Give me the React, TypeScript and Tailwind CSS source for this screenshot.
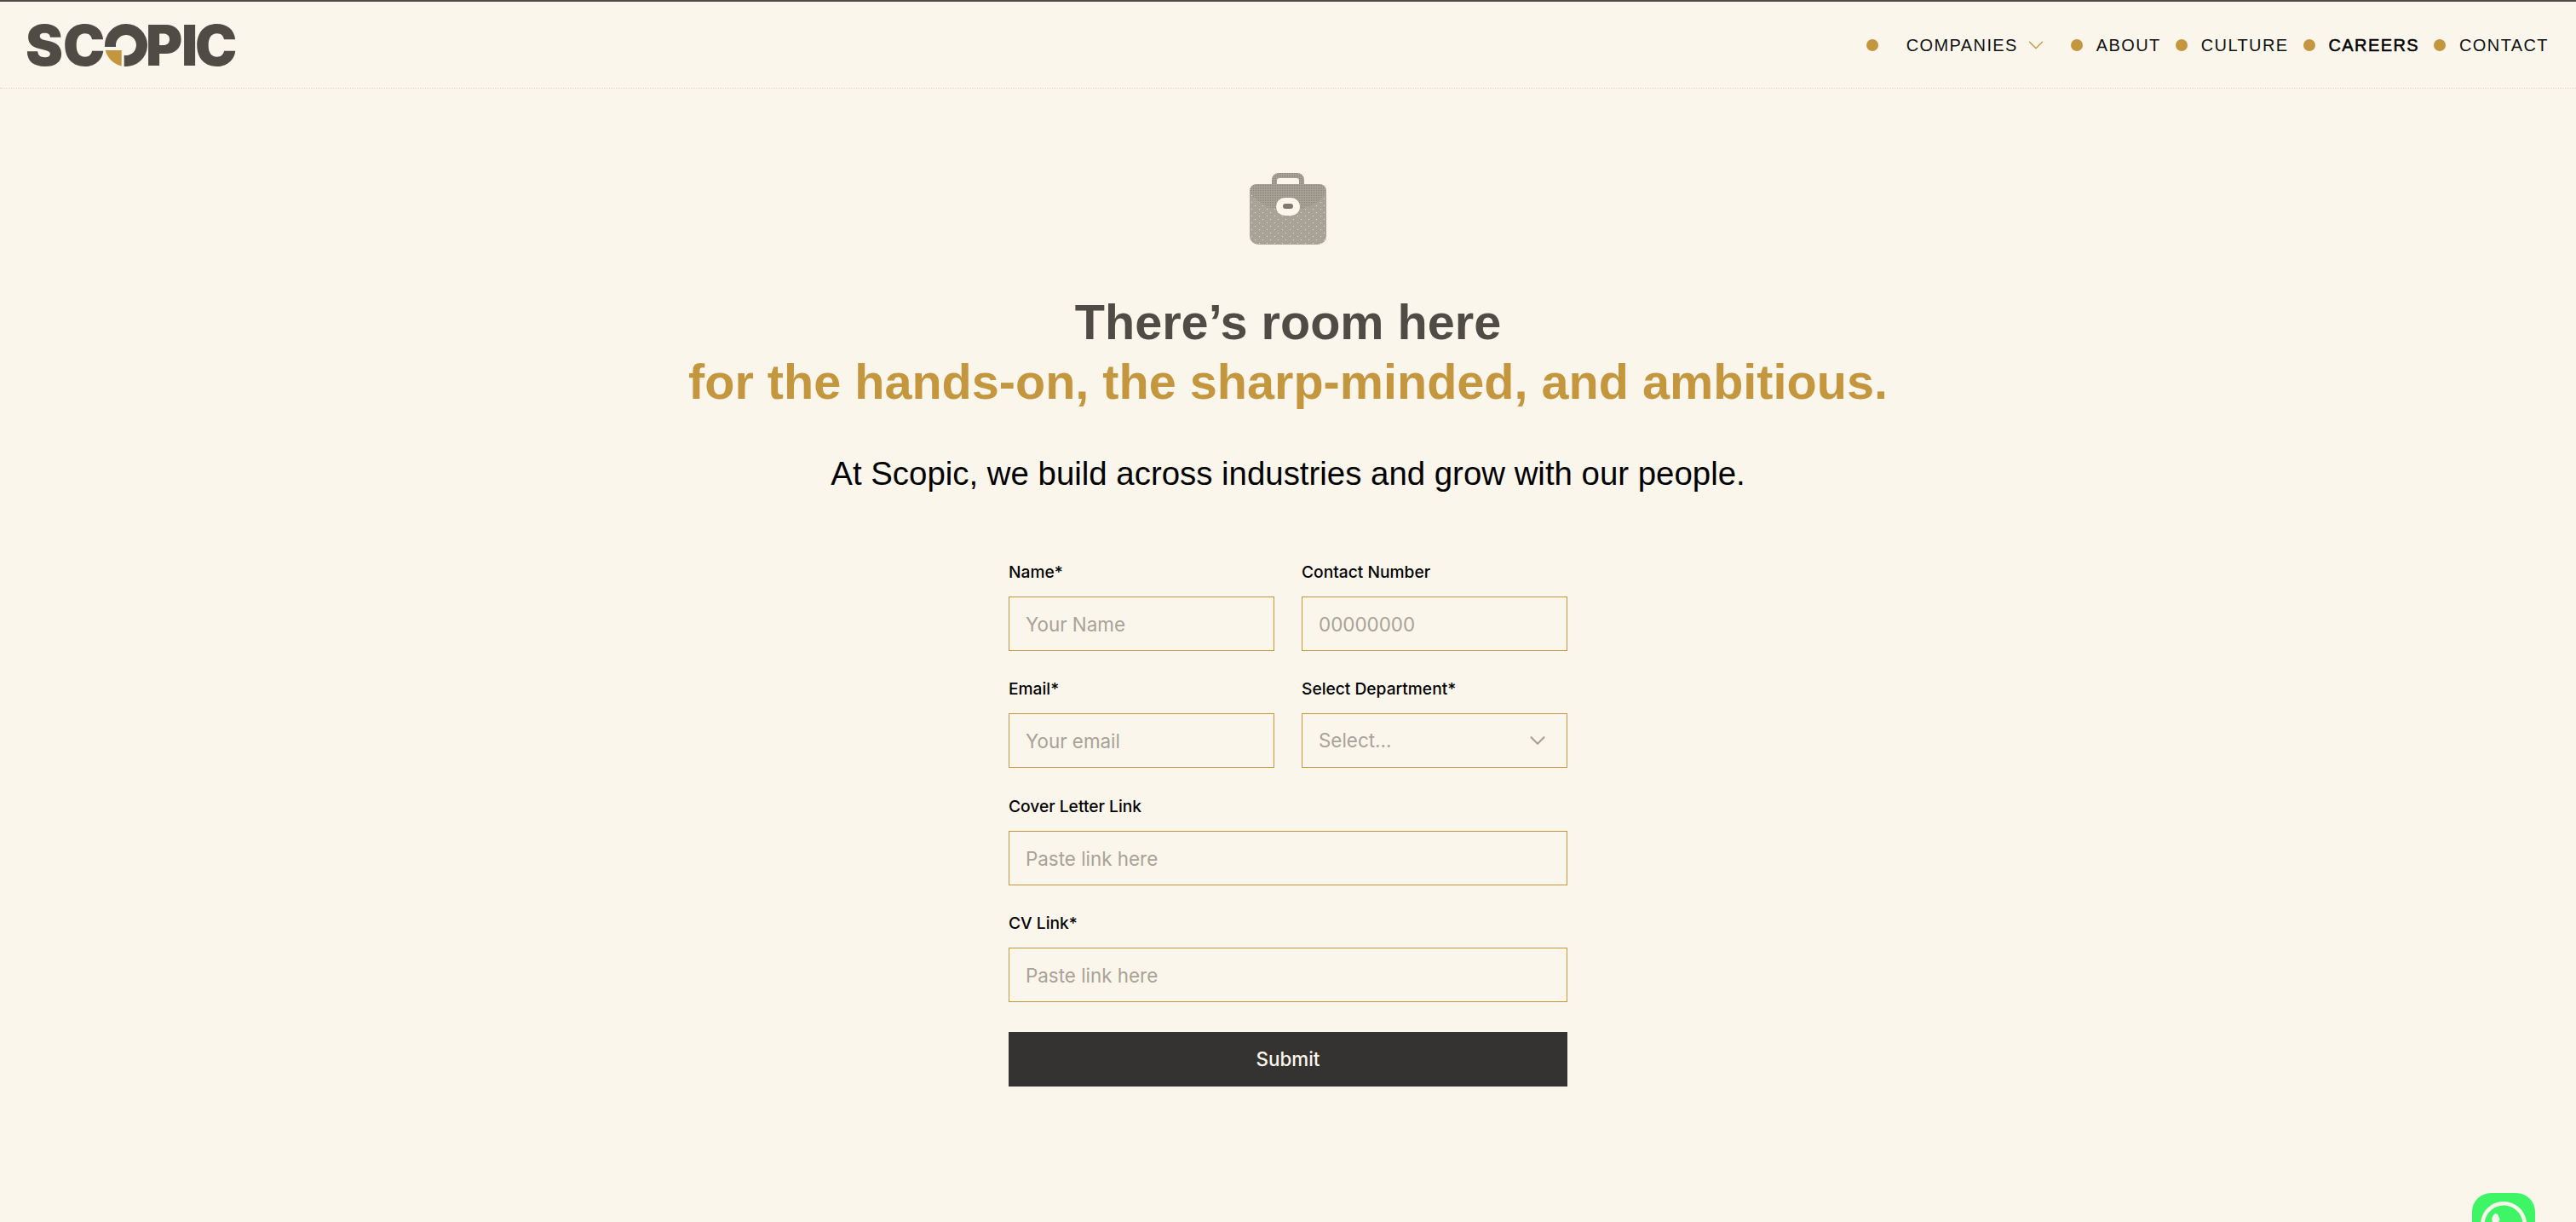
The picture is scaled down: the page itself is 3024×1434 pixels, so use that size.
import { ChevronDown } from 'lucide-react'
import { FaWhatsapp } from 'react-icons/fa'

const NAV = [
  { label: 'ABOUT' },
  { label: 'CULTURE' },
  { label: 'CAREERS', active: true },
  { label: 'CONTACT' },
]

function Dot() {
  return <span className="h-3.5 w-3.5 shrink-0 rounded-full bg-[#c4973f]" />
}

function Logo() {
  return (
    <div className="-ml-0.5 flex h-[50px] items-center font-['Inter',sans-serif] text-[66px] leading-none font-black text-[#504b45]">
      <span className="w-11">S</span>
      <span className="w-[49px]">C</span>
      <svg viewBox="0 0 50 50" className="h-[50px] w-[50px] shrink-0">
        <path
          d="M0.1 27A25 25 0 1 1 22.7 49.9V36.8A12 12 0 1 0 13.1 27Z"
          fill="#504b45"
        />
        <path d="M0.7 31H19.7V49.4A25 25 0 0 1 0.7 31Z" fill="#c4973f" />
      </svg>
      <span className="-ml-0.5 w-[42px]">P</span>
      <span className="w-4">I</span>
      <span>C</span>
    </div>
  )
}

function Briefcase() {
  return (
    <svg viewBox="0 0 90 84" className="h-[84px] w-[90px]">
      <defs>
        <pattern id="dense" width="2" height="2" patternUnits="userSpaceOnUse">
          <rect width="2" height="2" fill="#a8a297" />
          <rect width="1" height="1" fill="#8a857b" />
        </pattern>
        <pattern id="light" width="9" height="8" patternUnits="userSpaceOnUse">
          <rect width="9" height="8" fill="#a8a297" />
          <rect x="2" y="2" width="1" height="1" fill="#e6e1d5" />
          <rect x="6" y="6" width="1" height="1" fill="#e6e1d5" />
        </pattern>
      </defs>
      <path
        d="M26 14V8a8 8 0 0 1 8-8h22a8 8 0 0 1 8 8v6h-6V9a3 3 0 0 0-3-3H35a3 3 0 0 0-3 3v5Z"
        fill="url(#dense)"
      />
      <rect y="13" width="90" height="71" rx="10" fill="url(#light)" />
      <path d="M8 13H82a8 8 0 0 1 8 8c-6 14-22 22-45 22S6 35 0 21a8 8 0 0 1 8-8Z" fill="url(#dense)" />
      <rect x="31" y="29" width="28" height="21" rx="10.5" fill="#fbf6ec" />
      <rect x="39" y="36" width="12" height="6" rx="3" fill="#7f7a70" />
    </svg>
  )
}

function Field({ label, placeholder }: { label: string; placeholder: string }) {
  return (
    <label className="flex flex-col gap-4">
      <span className="text-[19.2px] leading-[25px] font-medium text-black">{label}</span>
      <input
        type="text"
        placeholder={placeholder}
        className="h-16 w-full border border-[#c4973f] bg-transparent px-[19px] text-[22.4px] text-black outline-none placeholder:text-[#a8a297]"
      />
    </label>
  )
}

function SelectField({ label, placeholder }: { label: string; placeholder: string }) {
  return (
    <div className="flex flex-col gap-4">
      <span className="text-[19.2px] leading-[25px] font-medium text-black">{label}</span>
      <div className="flex h-16 items-center justify-between border border-[#c4973f] px-[19px] text-[22.4px] text-[#a8a297]">
        <span>{placeholder}</span>
        <ChevronDown size={30} strokeWidth={1.75} className="text-[#a8a297]" />
      </div>
    </div>
  )
}

export default function App() {
  return (
    <div className="relative h-[1434px] overflow-hidden border-t-2 border-[#504b45] bg-[#fbf6ec] font-['Liberation_Sans',Arial,sans-serif]">
      <header className="flex h-[102px] items-center justify-between border-b border-dotted border-[#ddd6c8] pr-8 pl-8">
        <Logo />
        <nav className="flex items-center text-[20px] tracking-[1.4px] text-[#111]">
          <Dot />
          <span className="ml-[33px]">COMPANIES</span>
          <ChevronDown size={30} strokeWidth={1} className="mr-[26px] ml-1.5 text-[#c4973f]" />
          {NAV.map((item, i) => (
            <div key={item.label} className={`flex items-center gap-4 ${i > 0 ? 'ml-[17px]' : ''}`}>
              <Dot />
              <span className={item.active ? 'text-black [-webkit-text-stroke:0.5px_#000]' : ''}>{item.label}</span>
            </div>
          ))}
        </nav>
      </header>

      <main className="flex flex-col items-center pt-[99px]">
        <Briefcase />
        <h1 className="mt-14 text-center text-[57.6px] leading-[70px] font-bold text-[#504b45]">
          There’s room here
          <br />
          <span className="text-[#c4973f]">for the hands-on, the sharp-minded, and ambitious.</span>
        </h1>
        <p className="mt-[47px] text-center text-[38.4px] leading-[52px] text-black">
          At Scopic, we build across industries and grow with our people.
        </p>

        <form className="mt-[77px] flex w-[656px] flex-col font-['Inter',sans-serif]">
          <div className="grid grid-cols-2 gap-x-8 gap-y-8">
            <Field label="Name*" placeholder="Your Name" />
            <Field label="Contact Number" placeholder="00000000" />
            <Field label="Email*" placeholder="Your email" />
            <SelectField label="Select Department*" placeholder="Select..." />
            <div className="col-span-2 pt-px">
              <Field label="Cover Letter Link" placeholder="Paste link here" />
            </div>
            <div className="col-span-2">
              <Field label="CV Link*" placeholder="Paste link here" />
            </div>
          </div>
          <button type="button" className="mt-[35px] h-16 bg-[#343331] text-[22.4px] font-medium text-[#fbf6ec]">
            Submit
          </button>
        </form>
      </main>

      <div className="absolute top-[1398px] left-[2902px] flex h-[74px] w-[74px] items-center justify-center rounded-[22px] bg-[#3ef566] text-[#fbf6ec]">
        <FaWhatsapp size={62} />
      </div>
    </div>
  )
}
